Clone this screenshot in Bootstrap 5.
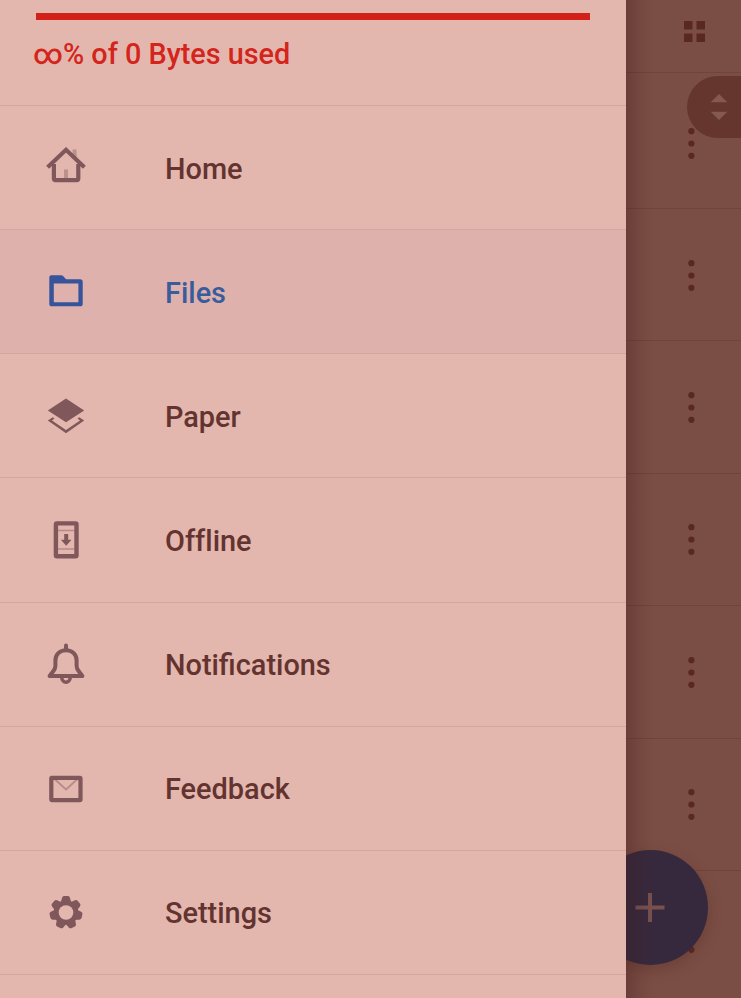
<!DOCTYPE html>
<html lang="en">
<head>
<meta charset="utf-8">
<meta name="viewport" content="width=device-width, initial-scale=1">
<title>Files</title>
<link href="https://cdn.jsdelivr.net/npm/bootstrap@5.3.0/dist/css/bootstrap.min.css" rel="stylesheet">
<style>
  body { font-family: Roboto, "Liberation Sans", sans-serif; background: #7b4e45; }
  .screen { width: 741px; height: 998px; }
  .drawer { width: 625.6px; background: #e3b7ae; }
  .quota { height: 106px; padding: 13px 36px 0; border-bottom: 1px solid #d4a69d; color: #d3251c; }
  .quota-bar { height: 7px; background: #d3211a; border-radius: 0; }
  .quota-text { font-size: 28.8px; line-height: 34px; margin: 17px 0 0 -3px; font-weight: 500; }
  .entry { height: 124.15px; padding-left: 42px; color: #633330; font-size: 28.9px; font-weight: 500; border-bottom: 1px solid #d4a69d; text-decoration: none; }
  .entry svg { width: 48px; height: 48px; color: #80575a; flex: none; }
  .entry span { margin-left: 75px; padding-top: 2px; line-height: 36px; }
  .entry .unjoined { font-variant-ligatures: none; }
  .entry.selected { background: #dfb1ac; color: #385c9c; }
  .entry.selected svg { color: #36549b; }
  .behind { background: #7b4e45; color: #59281f; }
  .toolbar { height: 73px; padding: 21px 36px 0 0; border-bottom: 1px solid #70443b; }
  .file-row { height: 132.4px; padding-right: 46px; border-bottom: 1px solid #70443b; }
  .first-row { height: 136px; padding-top: 4px; }
  .scroller { width: 55px; height: 62px; top: 75.5px; right: -1px; background: #64362d; border-radius: 31px 0 0 31px; color: #835950; }
  .add { width: 115px; height: 115px; left: -33px; top: 850px; background: #37293d; color: #78514f; box-shadow: 0 5px 14px rgba(80,40,30,.35); }
  .edge { width: 28px; left: 0; top: 0; background: linear-gradient(90deg, rgba(60,22,24,.28), rgba(60,22,24,.12) 12px, rgba(60,22,24,0)); }
</style>
</head>
<body class="overflow-hidden">
<svg class="d-none">
  <symbol id="more" viewBox="0 0 8 34"><g fill="currentColor"><circle cx="4.4" cy="5.2" r="3.1"/><circle cx="4.4" cy="17.5" r="3.1"/><circle cx="4.4" cy="29.8" r="3.1"/></g></symbol>
</svg>
<div class="screen d-flex overflow-hidden">
  <nav class="drawer d-flex flex-column flex-shrink-0 overflow-hidden">
    <div class="quota flex-shrink-0">
      <div class="quota-bar progress-bar w-100"></div>
      <p class="quota-text">∞% of 0 Bytes used</p>
    </div>
    <a class="entry d-flex align-items-center flex-shrink-0">
      <svg viewBox="0 0 48 48" fill="none" stroke="currentColor"><path d="M32.6 5.5v9M24 25.5v9" stroke-width="4" opacity=".4"/><path d="M11.9 20v14.6q0 1.6 1.6 1.6h21.2q1.6 0 1.6-1.6V20" stroke-width="4.2"/><path d="M5.6 23.2L24 5.8l18.4 17.4" stroke-width="4.2"/></svg>
      <span>Home</span>
    </a>
    <a class="entry selected d-flex align-items-center flex-shrink-0">
      <svg viewBox="0 0 48 48" fill="currentColor"><path fill-rule="evenodd" d="M9.3 7.3h9.7q1.5 0 2.5 1.2l2.6 2.8h14q2.6 0 2.6 2.6v21.8q0 2.6-2.6 2.6H9.9q-2.6 0-2.6-2.6V9.3q0-2 2-2zM11.8 15.5v18.7h24.6V15.5z"/></svg>
      <span>Files</span>
    </a>
    <a class="entry d-flex align-items-center flex-shrink-0">
      <svg viewBox="0 0 48 48" fill="currentColor"><path d="M24 6.4l18.2 12L24 30.2 5.8 18.4z"/><path d="M10.8 25.2L5.8 28.6 24 41.2l18.2-12.6-5-3.4-1.7 1.2 2.5 2.2L24 38.1 10 28.6l2.5-2.2z"/></svg>
      <span>Paper</span>
    </a>
    <a class="entry d-flex align-items-center flex-shrink-0">
      <svg viewBox="0 0 48 48" fill="none" stroke="currentColor"><rect x="13.9" y="7.4" width="20.6" height="32.8" rx="1" stroke-width="4.4"/><path d="M16 14.5h16.4M16 33h16.4" stroke-width="1.6" opacity=".45"/><path d="M22.2 18h4v5.8h3.3L24.2 29.7l-5.3-5.9h3.3z" fill="currentColor" stroke="none"/></svg>
      <span class="unjoined">Offline</span>
    </a>
    <a class="entry d-flex align-items-center flex-shrink-0">
      <svg viewBox="0 0 48 48" fill="none" stroke="currentColor" stroke-width="4" stroke-linejoin="round" stroke-linecap="round"><path d="M24 5.4v4"/><path d="M24 10.2C17.6 10.2 13.4 14.6 13.4 20.6v5.6c0 4.2-3 5.4-5.8 9.8h32.8c-2.8-4.4-5.8-5.6-5.8-9.8v-5.6c0-6-4.2-10.4-10.6-10.4z"/><path d="M19.8 37.8c.4 5.8 8 5.8 8.4 0" stroke-width="3.5"/></svg>
      <span>Notifications</span>
    </a>
    <a class="entry d-flex align-items-center flex-shrink-0">
      <svg viewBox="0 0 48 48" fill="none" stroke="currentColor"><path d="M12 14.5l12 11 12-11" stroke-width="1.8" opacity=".45"/><rect x="9.3" y="13.8" width="29.2" height="22.4" rx=".6" stroke-width="4.2"/></svg>
      <span>Feedback</span>
    </a>
    <a class="entry d-flex align-items-center flex-shrink-0">
      <svg viewBox="0 0 48 48"><defs><mask id="hole"><rect width="48" height="48" fill="#fff"/><circle cx="24" cy="24.5" r="7.3" fill="#000"/></mask>
        <path id="tooth" d="M18.8 14l1.2-4.6q.5-1.8 2-1.8h4q1.5 0 2 1.8l1.2 4.6z"/></defs>
        <g fill="currentColor" mask="url(#hole)"><g transform="translate(0 .5)"><circle cx="24" cy="24" r="12.3"/><use href="#tooth"/><use href="#tooth" transform="rotate(51.43 24 24)"/><use href="#tooth" transform="rotate(102.86 24 24)"/><use href="#tooth" transform="rotate(154.29 24 24)"/><use href="#tooth" transform="rotate(205.71 24 24)"/><use href="#tooth" transform="rotate(257.14 24 24)"/><use href="#tooth" transform="rotate(308.57 24 24)"/></g></g></svg>
      <span>Settings</span>
    </a>
  </nav>
  <main class="behind flex-grow-1 position-relative overflow-hidden">
    <div class="toolbar d-flex justify-content-end align-items-start">
      <svg width="21" height="21" fill="currentColor"><path d="M0 0h8.5v8.5H0zM12.5 0H21v8.5h-8.5zM0 12.5h8.5V21H0zM12.5 12.5H21V21h-8.5z"/></svg>
    </div>
    <div class="scroller position-absolute d-flex align-items-center justify-content-center">
      <svg width="18" height="28" fill="currentColor" class="ms-2"><path d="M9 1l8.3 8.3H.7zM9 27l8.3-8.3H.7z"/></svg>
    </div>
    <div class="file-row first-row d-flex align-items-center justify-content-end"><svg class="position-relative" width="8" height="34"><use href="#more"/></svg></div>
    <div class="file-row d-flex align-items-center justify-content-end"><svg width="8" height="34"><use href="#more"/></svg></div>
    <div class="file-row d-flex align-items-center justify-content-end"><svg width="8" height="34"><use href="#more"/></svg></div>
    <div class="file-row d-flex align-items-center justify-content-end"><svg width="8" height="34"><use href="#more"/></svg></div>
    <div class="file-row d-flex align-items-center justify-content-end"><svg width="8" height="34"><use href="#more"/></svg></div>
    <div class="file-row d-flex align-items-center justify-content-end"><svg width="8" height="34"><use href="#more"/></svg></div>
    <div class="file-row d-flex align-items-center justify-content-end"><svg width="8" height="34"><use href="#more"/></svg></div>
    <div class="add position-absolute rounded-circle d-flex align-items-center justify-content-center">
      <svg width="30" height="30" fill="none" stroke="currentColor" stroke-width="4"><path d="M.5 14.5h29M15 0v29"/></svg>
    </div>
    <div class="edge position-absolute h-100"></div>
  </main>
</div>
<script src="https://cdn.jsdelivr.net/npm/bootstrap@5.3.0/dist/js/bootstrap.bundle.min.js"></script>
</body>
</html>
